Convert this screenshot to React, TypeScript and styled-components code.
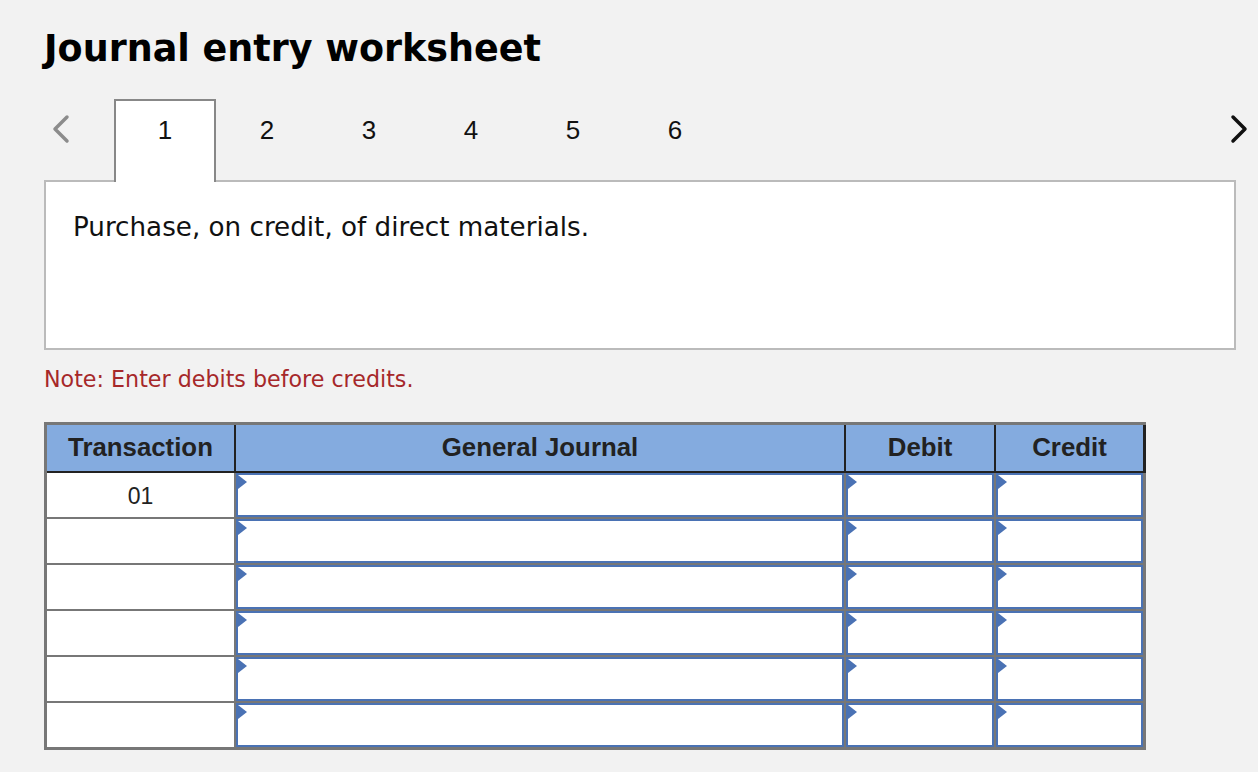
import React from 'react'
import styled, { createGlobalStyle } from 'styled-components'

const GlobalStyle = createGlobalStyle`
    html, body {
        margin: 0;
        padding: 0;
        background: #f2f2f2;
    }
    * {
        box-sizing: border-box;
    }
`

const Page = styled.div`
    width: 1258px;
    min-height: 772px;
    padding: 31px 0 0 44px;
    font-family: 'DejaVu Sans', Verdana, sans-serif;
`
const Content = styled.div`
    width: 1192px;
`
const Title = styled.h1`
    margin: 0;
    font-size: 36.5px;
    line-height: 1;
    font-weight: bold;
    color: #000;
`

// ---- tabs ----
const TabBar = styled.div`
    display: flex;
    align-items: flex-end;
    margin-top: 31px;
    margin-right: -14px;
    position: relative;
    z-index: 1;
`
const NavButton = styled.button<{ $width?: number }>`
    width: ${(props) => props.$width ?? 24}px;
    height: 83px;
    padding: 15px 0 0 8px;
    margin: 0 0 -2px;
    border: none;
    background: transparent;
    display: flex;
    align-items: flex-start;
    cursor: pointer;
`
const Tab = styled.div<{ $active?: boolean }>`
    width: 102px;
    height: 83px;
    margin-bottom: -2px;
    padding-top: 14px;
    border: 2px solid ${(props) => props.$active ? '#888' : 'transparent'};
    border-bottom: none;
    background: ${(props) => props.$active ? '#fff' : 'transparent'};
    font-family: 'Liberation Sans', Arial, sans-serif;
    font-size: 26px;
    line-height: 30px;
    text-align: center;
    color: #111;
`
const Spacer = styled.div`
    flex: 1;
`

const Chevron = (props: { dir: 'left' | 'right', color: string, width: number }) => (
    <svg width="18" height="30" viewBox="0 0 18 30" fill="none">
        <polyline
            points={props.dir === 'left' ? '15,3 3,15 15,27' : '3,3 15,15 3,27'}
            stroke={props.color}
            strokeWidth={props.width}
            strokeLinecap="round"
            strokeLinejoin="round"
        />
    </svg>
)

// ---- description panel ----
const Panel = styled.div`
    height: 170px;
    padding: 30px 27px;
    background: #fff;
    border: 2px solid #bbb;
    font-size: 26.2px;
    line-height: 30px;
    color: #111;
`
const Note = styled.div`
    margin-top: 16px;
    font-size: 22.2px;
    line-height: 26px;
    color: #a6282a;
`

// ---- journal table ----
const columns = '187px 608px 148px 147px'

const Table = styled.div`
    width: 1102px;
    margin-top: 30px;
    font-family: 'Liberation Sans', Arial, sans-serif;
`
const HeaderRow = styled.div`
    display: grid;
    grid-template-columns: ${columns};
    column-gap: 2px;
    background: #222;
    border-top: 3px solid #777;
    border-left: 3px solid #777;
    padding: 0 3px 2px 0;
`
const HeaderCell = styled.div`
    height: 46px;
    background: #84abdf;
    display: flex;
    align-items: center;
    justify-content: center;
    font-size: 25.8px;
    font-weight: bold;
    color: #222;
`
const Body = styled.div`
    display: grid;
    grid-template-columns: ${columns};
    grid-auto-rows: 44px;
    gap: 2px;
    background: #777;
    padding: 0 3px 3px 3px;
`
const TransactionCell = styled.div`
    background: #fff;
    display: flex;
    align-items: center;
    justify-content: center;
    padding-top: 3px;
    font-size: 23px;
    color: #222;
`
const EntryCell = styled.div`
    position: relative;
    background: #fff;
    border: 2px solid #4a72b4;

    &::before {
        content: '';
        position: absolute;
        top: 0;
        left: 0;
        border-left: 9px solid #4a72b4;
        border-top: 7px solid transparent;
        border-bottom: 7px solid transparent;
    }
`
const EntryInput = styled.input`
    width: 100%;
    height: 100%;
    border: none;
    outline: none;
    background: transparent;
    padding: 0 12px;
    font-family: 'Liberation Sans', Arial, sans-serif;
    font-size: 20px;
`

const rows = ['01', '', '', '', '', '']

export default function App() {
    return (
        <Page>
            <GlobalStyle />
            <Content>
                <Title>Journal entry worksheet</Title>
                <TabBar>
                    <NavButton $width={70} aria-label="previous">
                        <Chevron dir="left" color="#8c8c8c" width={3.5} />
                    </NavButton>
                    {[1, 2, 3, 4, 5, 6].map((n) => (
                        <Tab key={n} $active={n === 1}>{n}</Tab>
                    ))}
                    <Spacer />
                    <NavButton $width={28} aria-label="next">
                        <Chevron dir="right" color="#111" width={3.5} />
                    </NavButton>
                </TabBar>
                <Panel>Purchase, on credit, of direct materials.</Panel>
                <Note>Note: Enter debits before credits.</Note>
                <Table>
                    <HeaderRow>
                        <HeaderCell>Transaction</HeaderCell>
                        <HeaderCell>General Journal</HeaderCell>
                        <HeaderCell>Debit</HeaderCell>
                        <HeaderCell>Credit</HeaderCell>
                    </HeaderRow>
                    <Body>
                        {rows.map((label, i) => (
                            <React.Fragment key={i}>
                                <TransactionCell>{label}</TransactionCell>
                                <EntryCell><EntryInput /></EntryCell>
                                <EntryCell><EntryInput /></EntryCell>
                                <EntryCell><EntryInput /></EntryCell>
                            </React.Fragment>
                        ))}
                    </Body>
                </Table>
            </Content>
        </Page>
    )
}
